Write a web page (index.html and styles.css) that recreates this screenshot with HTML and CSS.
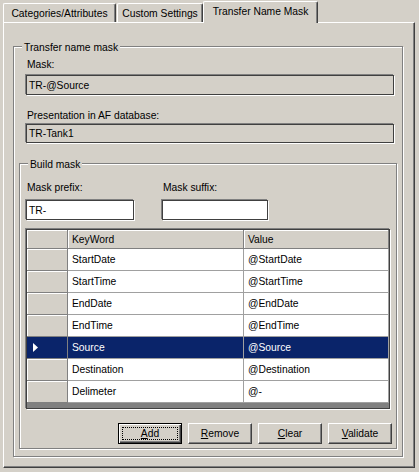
FILE: index.html
```html
<!DOCTYPE html>
<html>
<head>
<meta charset="utf-8">
<title>Transfer Name Mask</title>
<link rel="stylesheet" href="styles.css">
</head>
<body>
<div class="tabstrip">
  <div class="tab t1">Categories/Attributes</div>
  <div class="tab t2">Custom Settings</div>
  <div class="tab t3">Transfer Name Mask</div>
</div>
<div class="panel">
  <div class="group outer">
    <div class="caption">Transfer name mask</div>
    <div class="label l-mask">Mask:</div>
    <div class="field ro f-mask">TR-@Source</div>
    <div class="label l-pres">Presentation in AF database:</div>
    <div class="field ro f-pres">TR-Tank1</div>
    <div class="group inner">
      <div class="caption">Build mask</div>
      <div class="affix">
        <div class="affix-col c1">
          <div class="label">Mask prefix:</div>
          <div class="field edit">TR-</div>
        </div>
        <div class="affix-col c2">
          <div class="label">Mask suffix:</div>
          <div class="field edit"></div>
        </div>
      </div>
      <div class="grid">
        <div class="row head"><div class="rh"></div><div class="hc">KeyWord</div><div class="hc">Value</div></div>
        <div class="row"><div class="rh"></div><div class="c">StartDate</div><div class="c">@StartDate</div></div>
        <div class="row"><div class="rh"></div><div class="c">StartTime</div><div class="c">@StartTime</div></div>
        <div class="row"><div class="rh"></div><div class="c">EndDate</div><div class="c">@EndDate</div></div>
        <div class="row"><div class="rh"></div><div class="c">EndTime</div><div class="c">@EndTime</div></div>
        <div class="row sel"><div class="rh"><svg class="arrow" width="5" height="9" viewBox="0 0 5 9"><polygon points="0,0 5,4.5 0,9" fill="#fff"/></svg></div><div class="c">Source</div><div class="c">@Source</div></div>
        <div class="row"><div class="rh"></div><div class="c">Destination</div><div class="c">@Destination</div></div>
        <div class="row"><div class="rh"></div><div class="c">Delimeter</div><div class="c">@-</div></div>
      </div>
      <div class="buttons">
        <button class="btn default"><span class="focus"><u>A</u>dd</span></button>
        <button class="btn"><span><u>R</u>emove</span></button>
        <button class="btn"><span><u>C</u>lear</span></button>
        <button class="btn"><span><u>V</u>alidate</span></button>
      </div>
    </div>
  </div>
</div>
</body>
</html>
```

FILE: styles.css
```css
* { box-sizing: border-box; }
html, body { margin: 0; padding: 0; }
body {
  background: #d4d0c8;
  font-family: "Liberation Sans", Arial, sans-serif;
  font-size: 10.3px;
  line-height: 13px;
  color: #000;
  width: 419px;
  height: 472px;
  overflow: hidden;
}

/* tabs */
.tabstrip {
  display: flex;
  align-items: flex-end;
  height: 22px;
  padding-left: 3px;
}
.tab {
  height: 19px;
  padding-top: 3px;
  text-align: center;
  white-space: nowrap;
  background: #d4d0c8;
  border-top: 1px solid #fff;
  border-left: 1px solid #fff;
  border-right: 1px solid #404040;
  border-top-left-radius: 2px;
  border-top-right-radius: 2px;
  box-shadow: inset -1px 0 0 #808080;
}
.t1 { width: 113px; }
.t2 { width: 86px; margin-left: 1px; }
.t3 {
  width: 115px;
  height: 22px;
  margin-bottom: -1px;
  position: relative;
  z-index: 1;
}

/* tab page */
.panel {
  margin-left: 3px;
  width: 412px;
  height: 446px;
  border: 1px solid;
  border-color: #fff #404040 #404040 #fff;
  box-shadow: inset -1px -1px 0 #808080;
  padding: 23px 0 0 9px;
}

/* group boxes */
.group {
  border: 1px solid #808080;
  box-shadow: 1px 1px 0 #fff, inset 1px 1px 0 #fff;
}
.caption {
  width: max-content;
  margin: -6px 0 0 8px;
  padding: 0 2px;
  background: #d4d0c8;
}
.outer { width: 390px; height: 411px; }
.inner { margin: 20px 5px 0 5px; height: 286px; }

.label { white-space: nowrap; padding-left: 1px; }
.l-mask { margin: 4px 0 0 12px; }
.l-pres { margin: 14px 0 0 12px; }

.field {
  border: 1px solid #404040;
  box-shadow: -1px -1px 0 #808080, 1px 1px 0 #fff;
  padding: 0 0 0 2px;
  display: flex;
  align-items: center;
  white-space: nowrap;
}
.ro { background: #d4d0c8; }
.edit { background: #fff; height: 20px; }
.f-mask { margin: 4px 0 0 12px; width: 368px; height: 20px; }
.f-pres { margin: 2px 0 0 12px; width: 368px; height: 19px; }

.affix { display: flex; gap: 28px; margin: 10px 0 0 6px; }
.affix-col .label { margin-bottom: 6px; }
.c1 { width: 108px; }
.c2 { width: 106px; }

/* data grid */
.grid {
  margin: 9px 0 0 6px;
  width: 364px;
  height: 180px;
  border: 1px solid #404040;
  box-shadow: -1px -1px 0 #808080, 1px 1px 0 #fff;
  background: #808080;
  overflow: hidden;
}
.row {
  display: grid;
  grid-template-columns: 41px 176px 145px;
  height: 22px;
}
.row.head { height: 19px; }
.rh, .hc {
  background: #d4d0c8;
  border-right: 1px solid #808080;
  border-bottom: 1px solid #808080;
  box-shadow: inset 1px 1px 0 #fff;
}
.hc { padding: 3px 0 0 4px; white-space: nowrap; }
.c {
  background: #fff;
  border-right: 1px solid #a0a0a0;
  border-bottom: 1px solid #a0a0a0;
  padding: 4px 0 0 4px;
  white-space: nowrap;
}
.row.sel .c, .row.sel .rh {
  background: #0a246a;
  color: #fff;
}
.row.sel .rh {
  box-shadow: none;
  display: flex;
  align-items: center;
  padding-left: 6px;
}
.arrow { display: block; }

/* buttons */
.buttons {
  display: flex;
  justify-content: flex-end;
  gap: 6px;
  margin: 14px 4px 0 0;
}
.btn {
  width: 64px;
  height: 21px;
  margin: 0;
  padding: 0;
  font: inherit;
  color: #000;
  background: #d4d0c8;
  border: 1px solid;
  border-color: #fff #404040 #404040 #fff;
  border-radius: 0;
  box-shadow: inset -1px -1px 0 #808080;
  display: flex;
  align-items: center;
  justify-content: center;
}
.btn.default {
  border-color: #000;
  box-shadow: inset 1px 1px 0 #fff, inset -1px -1px 0 #404040, inset -2px -2px 0 #808080;
  padding: 3px;
}
.focus {
  flex: 1;
  align-self: stretch;
  border: 1px dotted #000;
  display: flex;
  align-items: center;
  justify-content: center;
}
```
